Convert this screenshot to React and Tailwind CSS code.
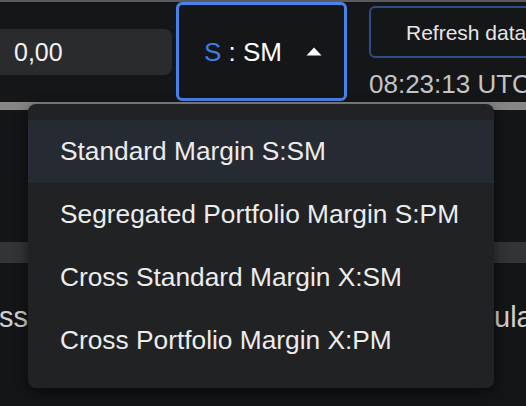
import React from "react";

const items = [
  "Standard Margin S:SM",
  "Segregated Portfolio Margin S:PM",
  "Cross Standard Margin X:SM",
  "Cross Portfolio Margin X:PM",
];

export default function App() {
  return (
    <div
      className="relative w-[526px] h-[406px] overflow-hidden bg-[#141517] text-white"
      style={{ fontFamily: '"Liberation Sans", Arial, sans-serif' }}
    >
      <div className="h-[2px] bg-[#5a5a5c]" />
      <div className="flex h-[100px] bg-[#151618]">
        <div className="shrink-0 self-center -ml-[20px] w-[192px] h-[46px] rounded-lg bg-[#2a2b2d] flex items-center pl-[34px] text-[25px] text-[#f2f2f2] leading-none">
          0,00
        </div>
        <div className="shrink-0 ml-[4px] w-[171px] h-[99px] rounded-md border-[3px] border-[#4b82ea] flex items-center pl-[25px] text-[26px] leading-none">
          <span className="text-[#3f7ce8]">S</span>
          <span className="text-white">&nbsp;:&nbsp;SM</span>
          <svg className="ml-[24px] shrink-0" width="16" height="9" viewBox="0 0 16 9">
            <path d="M8 0.5 L15.5 8.5 L0.5 8.5 Z" fill="#ffffff" />
          </svg>
        </div>
        <div className="shrink-0 ml-[22px] pt-[4px] flex flex-col">
          <div className="w-[220px] h-[52px] rounded-md border-2 border-[#2e4d86] flex items-center pl-[35px] text-[21px] text-[#e6e6e6] leading-none whitespace-nowrap">
            Refresh data
          </div>
          <div className="mt-[13px] text-[26px] leading-[26px] text-[#c4c4c4] whitespace-nowrap">
            08:23:13 UTC
          </div>
        </div>
      </div>
      <div className="h-[8px] bg-[#868686]" />
      <div className="h-[132px] bg-[#141517]" />
      <div className="h-[21px] bg-[#333436]" />
      <div className="flex mt-[40px] text-[29px] leading-none text-[#cfcfcf] whitespace-nowrap">
        <span className="shrink-0 -ml-[1px]">ss</span>
        <span className="shrink-0 ml-[466px]">ulat</span>
      </div>

      <div className="absolute left-[28px] top-[104px] w-[466px] h-[284px] rounded-lg bg-[#212224] py-[16px] shadow-[0_4px_14px_rgba(0,0,0,0.55)]">
        {items.map((t, i) => (
          <div
            key={t}
            className={
              "h-[63px] flex items-center pl-[32px] text-[26.3px] leading-none text-[#ececec] whitespace-nowrap " +
              (i === 0 ? "bg-[#252a33]" : "")
            }
          >
            {t}
          </div>
        ))}
      </div>
    </div>
  );
}
